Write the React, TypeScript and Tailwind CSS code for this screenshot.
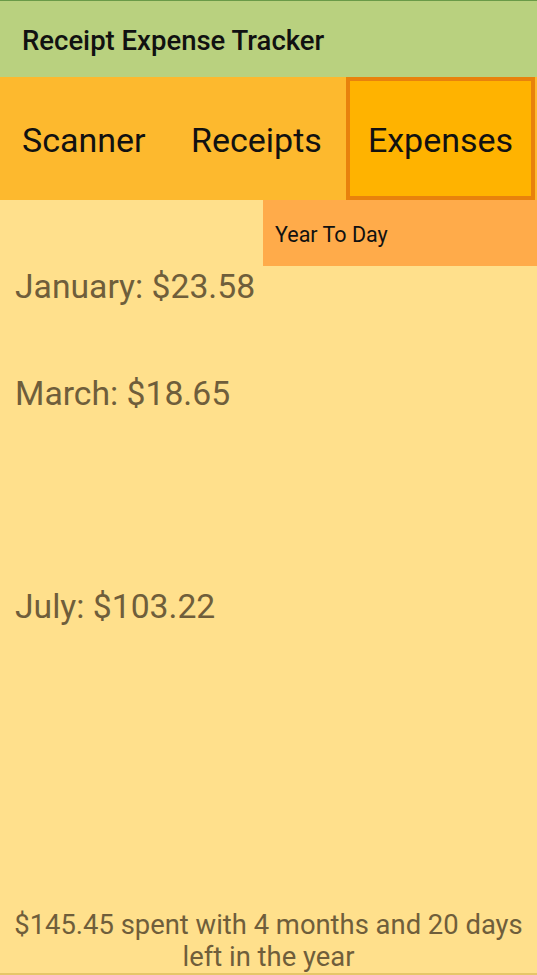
import React from "react";

const months = [
  "January: $23.58",
  "",
  "March: $18.65",
  "",
  "",
  "",
  "July: $103.22",
  "",
  "",
  "",
  "",
  "",
];

export default function App() {
  return (
    <div className="w-[537px] h-[975px] flex flex-col bg-[#ffe08c] font-['Roboto',sans-serif] overflow-hidden">
      {/* Barra de título */}
      <div className="h-[77px] shrink-0 bg-[#b9d17f] border-t border-[#6a9a48] flex items-center px-[22px] pt-[3px]">
        <h1 className="text-[27.5px] font-medium text-[#111]">Receipt Expense Tracker</h1>
      </div>

      {/* Pestañas */}
      <div className="h-[123px] shrink-0 bg-[#fdb92e] flex items-stretch">
        <div className="w-[169px] flex items-center pl-[22px] pt-[4px] text-[34px] text-[#111]">Scanner</div>
        <div className="w-[177px] flex items-center pl-[22px] pt-[4px] text-[34px] text-[#111]">Receipts</div>
        <div className="w-[189px] flex items-center justify-center pt-[4px] border-[4px] border-[#e8820c] bg-[#ffb300] text-[34px] text-[#111]">
          Expenses
        </div>
      </div>

      {/* Contenido */}
      <div className="flex-1 flex flex-col relative">
        <div className="flex justify-end">
          <div className="w-[274px] h-[66px] bg-[#ffab4a] flex items-center px-[12px] pt-[5px] text-[21.5px] text-[#111]">
            Year To Day
          </div>
        </div>
        <div className="flex flex-col -mt-[5px]">
          {months.map((m, i) => (
            <div key={i} className="h-[53.3px] flex items-center px-[15px] text-[33.7px] text-[#6f5e3b]">
              {m}
            </div>
          ))}
        </div>
        <div className="mt-auto text-center text-[27.4px] leading-[32px] text-[#6f5e3b] border-b-[2px] border-[#e6c66a]">
          $145.45 spent with 4 months and 20 days
          <br />
          left in the year
        </div>
      </div>
    </div>
  );
}
